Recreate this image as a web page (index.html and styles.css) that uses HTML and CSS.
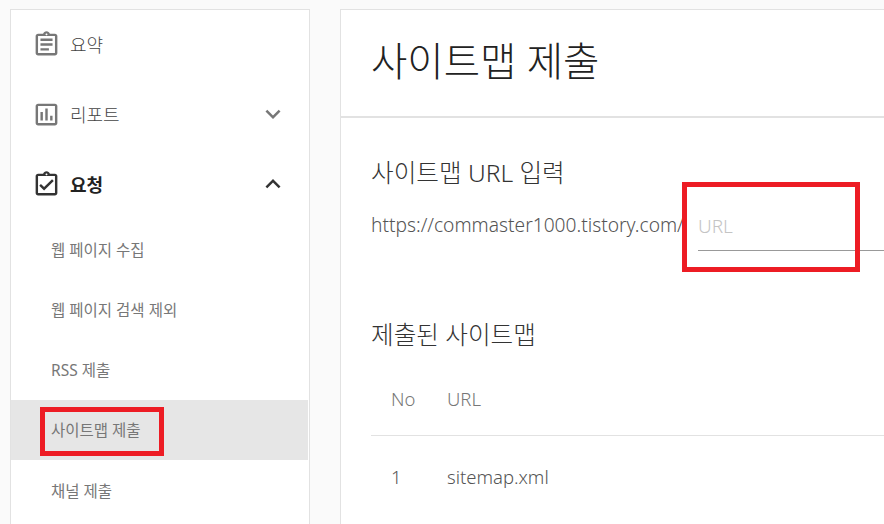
FILE: index.html
```html
<!DOCTYPE html>
<html lang="ko">
<head>
<meta charset="utf-8">
<title>사이트맵 제출</title>
<link rel="stylesheet" href="styles.css">
</head>
<body>
<div class="page">
  <nav class="side">
    <a class="top">
      <svg class="ico" viewBox="0 0 24 24"><path d="M19 3h-4.18C14.4 1.84 13.3 1 12 1s-2.4.84-2.82 2H5c-1.1 0-2 .9-2 2v14c0 1.1.9 2 2 2h14c1.1 0 2-.9 2-2V5c0-1.1-.9-2-2-2zm-7-.2c.44 0 .8.36.8.8s-.36.8-.8.8-.8-.36-.8-.8.36-.8.8-.8zM19 19H5V5h14v14zM7 7h10v2H7zm0 4h10v2H7zm0 4h7v2H7z"/></svg>
      <span>요약</span>
    </a>
    <a class="top">
      <svg class="ico" viewBox="0 0 24 24"><path d="M19 3H5c-1.1 0-2 .9-2 2v14c0 1.1.9 2 2 2h14c1.1 0 2-.9 2-2V5c0-1.1-.9-2-2-2zm0 16H5V5h14v14zM7 10h2v7H7zm4-3h2v10h-2zm4 6h2v4h-2z"/></svg>
      <span>리포트</span>
      <svg class="chev" viewBox="0 0 24 24"><path d="M7.41 8.59 12 13.17l4.59-4.58L18 10l-6 6-6-6z"/></svg>
    </a>
    <a class="top on">
      <svg class="ico" viewBox="0 0 24 24"><path d="M19 3h-4.18C14.4 1.84 13.3 1 12 1s-2.4.84-2.82 2H5c-1.1 0-2 .9-2 2v14c0 1.1.9 2 2 2h14c1.1 0 2-.9 2-2V5c0-1.1-.9-2-2-2zm-7-.2c.44 0 .8.36.8.8s-.36.8-.8.8-.8-.36-.8-.8.36-.8.8-.8zM19 19H5V5h14v14zm-9-2-4-4 1.41-1.41L10 14.17l6.59-6.59L18 9l-8 8z"/></svg>
      <span>요청</span>
      <svg class="chev" viewBox="0 0 24 24"><path d="M12 8l-6 6 1.41 1.41L12 10.83l4.59 4.58L18 14z"/></svg>
    </a>
    <a class="sub">웹 페이지 수집</a>
    <a class="sub">웹 페이지 검색 제외</a>
    <a class="sub">RSS 제출</a>
    <a class="sub cur">사이트맵 제출</a>
    <a class="sub">채널 제출</a>
  </nav>
  <main class="main">
    <header class="head"><h1>사이트맵 제출</h1></header>
    <section class="body">
      <h2 class="h-input">사이트맵 URL 입력</h2>
      <div class="url-row">
        <span class="base">https://commaster1000.tistory.com/</span>
        <span class="field">URL</span>
      </div>
      <h2 class="h-list">제출된 사이트맵</h2>
      <div class="row row-head"><span class="no">No</span><span>URL</span></div>
      <div class="row row-data"><span class="no">1</span><span>sitemap.xml</span></div>
    </section>
  </main>
</div>
<div class="mark mark-field"></div>
<div class="mark mark-nav"></div>
</body>
</html>
```
FILE: styles.css
```css
* { box-sizing: border-box; }
html, body { margin: 0; height: 524px; overflow: hidden; background: #fafafa; }
body { font-family: "Noto Sans", "Noto Sans CJK KR", sans-serif; font-weight: 300; position: relative; }
.page { display: flex; gap: 30px; padding: 9px 0 0 10px; width: 884px; height: 524px; overflow: hidden; }
.side { flex: none; width: 300px; background: #fff; border: 1px solid #e2e2e2; border-bottom: none; display: flex; flex-direction: column; padding-right: 1px; overflow: hidden; }
.top { flex: none; height: 70px; display: flex; align-items: center; padding: 0 20px 2px 21px; font-size: 18px; color: #444; }
.top span { margin-left: 9px; flex: 1; }
.top.on { color: #222; font-weight: 700; }
.ico { width: 29px; height: 29px; fill: #777; flex: none; }
.on .ico { fill: #333; }
.chev { width: 30px; height: 30px; fill: #777; flex: none; }
.on .chev { fill: #333; }
.sub { flex: none; height: 60px; display: flex; align-items: center; padding: 0 0 1px 40px; font-size: 15.5px; color: #777; font-weight: 400; }
.sub:last-child { height: 54px; padding: 6px 0 0 40px; }
.cur { background: #e6e6e6; }
.main { flex: none; width: 544px; background: #fff; border: 1px solid #e2e2e2; border-width: 1px 0 0 1px; }
.head { height: 108px; border-bottom: 2px solid #e2e2e2; padding: 23px 0 0 30px; }
h1 { margin: 0; font-size: 39.5px; font-weight: 300; color: #222; line-height: 56px; }
.body { padding: 0 0 0 30px; }
h2 { margin: 0; font-size: 24.6px; font-weight: 300; color: #333; line-height: 32px; }
.h-input { margin-top: 39px; }
.url-row { display: flex; margin-top: 19px; height: 43px; font-size: 19.2px; color: #555; }
.base { flex: none; width: 327px; line-height: 34px; white-space: nowrap; }
.field { flex: 1; line-height: 36px; color: #c4c4c4; border-bottom: 1px solid #999; height: 43px; font-size: 19px; }
.h-list { margin-top: 68px; }
.row { display: flex; font-size: 18.5px; color: #777; padding-left: 20px; align-items: center; }
.no { flex: none; width: 56px; }
.row-head { height: 85px; border-bottom: 1px solid #e2e2e2; padding-top: 11px; }
.row-data { height: 80px; color: #555; }
.mark { position: absolute; border: 5px solid #ed1c24; }
.mark-field { left: 682px; top: 182px; width: 178px; height: 90px; }
.mark-nav { left: 40px; top: 407px; width: 124px; height: 49px; }
```
